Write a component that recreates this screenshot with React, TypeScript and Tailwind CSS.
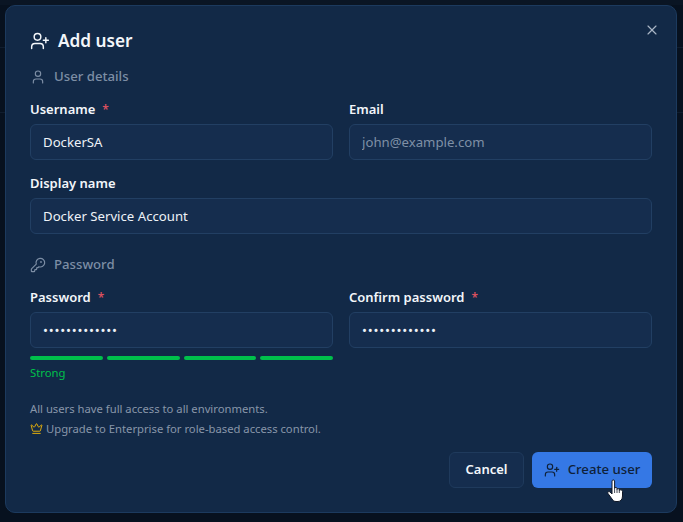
import { KeyRound, User, UserPlus, X, Crown } from "lucide-react"

const font = "font-['Noto_Sans','Open_Sans',sans-serif]"

function Field({ label, required, value, placeholder, password }: { label: string; required?: boolean; value?: string; placeholder?: string; password?: boolean }) {
  return (
    <div className="flex flex-col gap-[3px]">
      <div className="flex h-[22px] items-center text-[13px] font-semibold text-[#f3f6fa]">
        {label}
        {required && <span className="ml-[7px] text-[12px] text-[#d9505f]">*</span>}
      </div>
      <input
        readOnly
        type={password ? "password" : "text"}
        value={value ?? ""}
        placeholder={placeholder}
        className={`h-[36px] w-full rounded-[6px] border border-[#223f63] bg-[#152d4e] px-[12px] text-[13.2px] text-[#eef2f7] outline-none placeholder:text-[#7f90a6] ${password ? "tracking-[0.8px]" : ""}`}
      />
    </div>
  )
}

function SectionTitle({ icon, title }: { icon: React.ReactNode; title: string }) {
  return (
    <div className="flex h-[20px] items-center gap-[8px] text-[13.2px] font-medium text-[#7d8ea5]">
      {icon}
      {title}
    </div>
  )
}

export default function App() {
  return (
    <div className={`${font} h-[522px] w-[683px] overflow-hidden bg-[#07111f] bg-[linear-gradient(to_bottom,#0a1524_0,#0a1524_5px,transparent_5px,transparent_47px,#101d2e_47px,#101d2e_48px,transparent_48px,transparent_112px,#101d2e_112px,#101d2e_113px,transparent_113px)] p-[5px]`}>
      <div className="relative flex h-[508px] w-[672px] flex-col rounded-[10px] border border-[#1c3a5e] bg-[#122947] px-[24px] pt-[24px]">
        <button className="absolute right-[16px] top-[16px] text-[#a9b5c5]">
          <X className="h-[16px] w-[16px]" strokeWidth={1.75} />
        </button>

        <div className="flex h-[22px] items-center gap-[8px] text-[17.2px] font-semibold text-[#f3f6fa]">
          <UserPlus className="h-[20px] w-[20px]" strokeWidth={1.75} />
          Add user
        </div>

        <div className="mt-[15px]">
          <SectionTitle icon={<User className="h-[16px] w-[16px]" strokeWidth={1.75} />} title="User details" />
        </div>

        <div className="mt-[12px] grid grid-cols-2 gap-x-[16px]">
          <Field label="Username" required value="DockerSA" />
          <Field label="Email" placeholder="john@example.com" />
        </div>

        <div className="mt-[13px]">
          <Field label="Display name" value="Docker Service Account" />
        </div>

        <div className="mt-[21px]">
          <SectionTitle icon={<KeyRound className="h-[16px] w-[16px]" strokeWidth={1.75} />} title="Password" />
        </div>

        <div className="mt-[12px] grid grid-cols-2 gap-x-[16px]">
          <div>
            <Field label="Password" required password value="Docker-Secret" />
            <div className="mt-[8px] flex gap-[4px]">
              <div className="h-[4px] flex-1 rounded-full bg-[#00c04b]" />
              <div className="h-[4px] flex-1 rounded-full bg-[#00c04b]" />
              <div className="h-[4px] flex-1 rounded-full bg-[#00c04b]" />
              <div className="h-[4px] flex-1 rounded-full bg-[#00c04b]" />
            </div>
            <div className="mt-[5px] text-[11.3px] leading-[16px] text-[#00c04b]">Strong</div>
          </div>
          <Field label="Confirm password" required password value="Docker-Secret" />
        </div>

        <div className="mt-[18px] text-[11.25px] leading-[19.5px] text-[#8896a9]">
          <div>All users have full access to all environments.</div>
          <div className="flex items-center gap-[3px]">
            <Crown className="h-[13px] w-[13px] text-[#eab308]" strokeWidth={1.75} />
            Upgrade to Enterprise for role-based access control.
          </div>
        </div>

        <div className="mt-[14px] flex justify-end gap-[8px]">
          <button className="h-[36px] w-[75px] rounded-[6px] border border-[#1f3a5c] bg-[#152d4e] text-[13px] font-semibold text-[#f3f6fa]">
            Cancel
          </button>
          <button className="relative flex h-[36px] w-[120px] items-center justify-center gap-[8px] rounded-[6px] bg-[#3578e5] text-[13.2px] font-medium text-[#0f2138]">
            <UserPlus className="h-[16px] w-[16px]" strokeWidth={1.75} />
            Create user
            <svg viewBox="0 0 17 23" className="absolute left-[75px] top-[27px] h-[23px] w-[17px]">
              <path
                d="M5 2C5 .6 7.600 .6 7.600 2V9.500C7.600 8 10 8 10 9.500V10.500C10 9.300 12.300 9.300 12.300 10.700V11.500C12.300 10.400 15.500 10.500 15.500 12.500V17C15.500 20.500 13.500 22.500 11 22.500H9C7 22.500 6 21.500 5 20L1 14.500C.2 13 1.800 11.800 3 13L5 15Z"
                fill="#ffffff"
                stroke="#111827"
                strokeWidth="1"
              />
              <path d="M7.600 9.500V14M10 10.500V14M12.300 11.500V14" fill="none" stroke="#111827" strokeWidth="0.8" />
            </svg>
          </button>
        </div>
      </div>
    </div>
  )
}
